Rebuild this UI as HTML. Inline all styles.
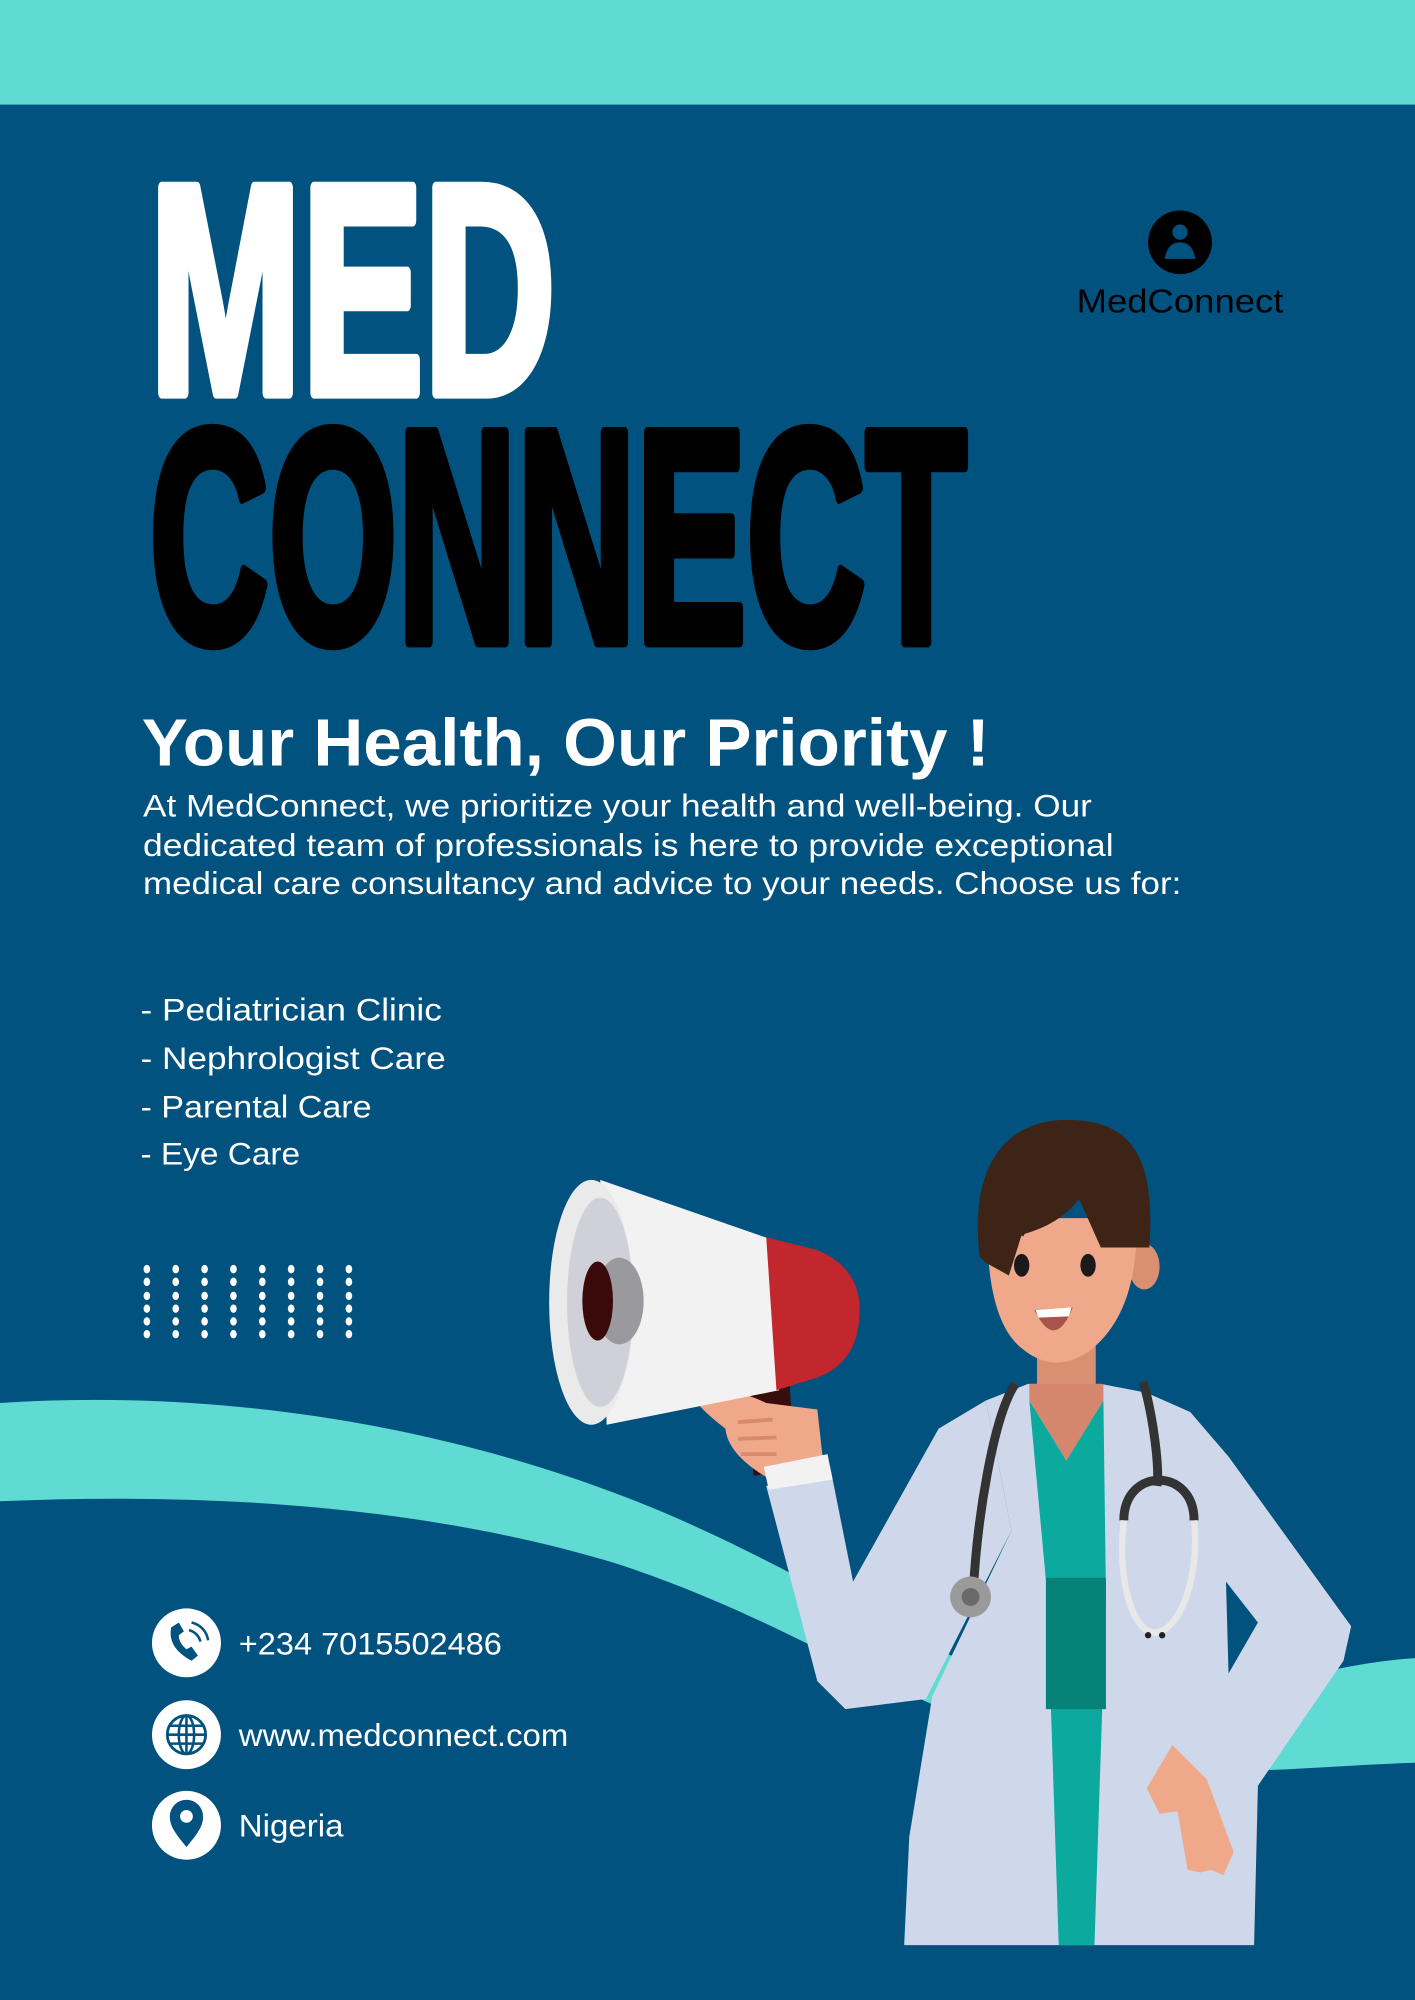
<!DOCTYPE html>
<html><head><meta charset="utf-8"><style>
html,body{margin:0;padding:0;background:#02527f;}
svg{display:block}
text{font-family:"Liberation Sans",sans-serif}
</style></head><body>
<svg width="1415" height="2000" viewBox="0 0 1108 1568" preserveAspectRatio="none" xmlns="http://www.w3.org/2000/svg">
<rect width="1108" height="1568" fill="#02527f"/>
<rect width="1108" height="82" fill="#5fdbd3"/>

<!-- wave -->
<path d="M0,1100 C150,1090 320,1110 480,1170 C620,1222 720,1300 830,1330 C930,1350 1020,1305 1108,1300 L1108,1382 C1010,1385 920,1400 820,1370 C700,1335 620,1270 480,1225 C330,1180 160,1170 0,1177 Z" fill="#5fdbd3"/>

<!-- titles -->
<text x="117" y="308" font-size="234" font-weight="bold" fill="#fff" stroke="#fff" stroke-width="9" stroke-linejoin="round" textLength="318" lengthAdjust="spacingAndGlyphs">MED</text>
<text x="117" y="503" font-size="238" font-weight="bold" fill="#000" stroke="#000" stroke-width="9" stroke-linejoin="round" textLength="640" lengthAdjust="spacingAndGlyphs">CONNECT</text>

<!-- logo -->
<circle cx="924" cy="190" r="25" fill="#000"/>
<circle cx="924" cy="182" r="6" fill="#02527f"/>
<path d="M912,203 Q914,190 924,190 Q934,190 936,203 Z" fill="#02527f"/>
<text x="843" y="245" font-size="26" fill="#000" textLength="162" lengthAdjust="spacingAndGlyphs">MedConnect</text>

<text x="111" y="600" font-size="52" font-weight="bold" fill="#fff" textLength="664" lengthAdjust="spacingAndGlyphs">Your Health, Our Priority !</text>
<g fill="#fff" font-size="25">
<text x="112" y="640" textLength="743" lengthAdjust="spacingAndGlyphs">At MedConnect, we prioritize your health and well-being. Our</text>
<text x="112" y="671" textLength="760" lengthAdjust="spacingAndGlyphs">dedicated team of professionals is here to provide exceptional</text>
<text x="112" y="701" textLength="813" lengthAdjust="spacingAndGlyphs">medical care consultancy and advice to your needs. Choose us for:</text>
<text x="110" y="800" textLength="236" lengthAdjust="spacingAndGlyphs">- Pediatrician Clinic</text>
<text x="110" y="838" textLength="239" lengthAdjust="spacingAndGlyphs">- Nephrologist Care</text>
<text x="110" y="876" textLength="181" lengthAdjust="spacingAndGlyphs">- Parental Care</text>
<text x="110" y="913" textLength="125" lengthAdjust="spacingAndGlyphs">- Eye Care</text>
<text x="187" y="1297" textLength="206" lengthAdjust="spacingAndGlyphs">+234 7015502486</text>
<text x="187" y="1369" textLength="258" lengthAdjust="spacingAndGlyphs">www.medconnect.com</text>
<text x="187" y="1440" textLength="82" lengthAdjust="spacingAndGlyphs">Nigeria</text>
</g>

<!-- dots -->
<g fill="#fff">
<g id="col">
<ellipse cx="115" cy="995" rx="2.6" ry="3.3"/><ellipse cx="115" cy="1005" rx="2.6" ry="3.3"/><ellipse cx="115" cy="1016" rx="2.6" ry="3.3"/><ellipse cx="115" cy="1026" rx="2.6" ry="3.3"/><ellipse cx="115" cy="1036" rx="2.6" ry="3.3"/><ellipse cx="115" cy="1046" rx="2.6" ry="3.3"/>
</g>
<use href="#col" x="22.6"/><use href="#col" x="45.2"/><use href="#col" x="67.8"/><use href="#col" x="90.4"/><use href="#col" x="113"/><use href="#col" x="135.6"/><use href="#col" x="158.2"/>
</g>

<!-- contact icons -->
<circle cx="146" cy="1288" r="27" fill="#fff"/>
<path d="M134,1276 Q131,1292 150,1302 L155,1298 L150,1291 L146,1293 Q140,1288 140,1282 L144,1279 L140,1272 Z" fill="#02527f"/>
<path d="M148,1278 Q155,1280 157,1287 M150,1272 Q161,1275 163,1286" stroke="#02527f" stroke-width="2" fill="none"/>
<circle cx="146" cy="1360" r="27" fill="#fff"/>
<circle cx="146" cy="1360" r="15" fill="none" stroke="#02527f" stroke-width="2.2"/>
<ellipse cx="146" cy="1360" rx="6" ry="15" fill="none" stroke="#02527f" stroke-width="2"/>
<path d="M131,1360 H161 M133,1353 H159 M133,1367 H159 M146,1345 V1375" stroke="#02527f" stroke-width="2"/>
<circle cx="146" cy="1431" r="27" fill="#fff"/>
<path d="M146,1448 C136,1436 133,1431 133,1424 A13,13 0 0 1 159,1424 C159,1431 156,1436 146,1448 Z" fill="#02527f"/>
<circle cx="146" cy="1424" r="5" fill="#fff"/>

<!-- megaphone -->
<path d="M585,1080 L618,1078 L622,1152 L590,1157 Z" fill="#3a0d0d"/>
<path d="M540,1092 Q570,1085 600,1100 L640,1105 L645,1150 L600,1158 Q570,1140 568,1120 Q548,1105 540,1092 Z" fill="#f0a88a"/>
<path d="M578,1115 L605,1113 M578,1128 L608,1127 M580,1140 L608,1140" stroke="#d88a6e" stroke-width="3"/>
<path d="M470,925 L605,972 L610,1090 L475,1117 Z" fill="#f2f2f2"/>
<path d="M600,970 L640,980 Q675,995 673,1030 Q672,1068 640,1080 L608,1090 Z" fill="#c1272d"/>
<ellipse cx="463" cy="1021" rx="33" ry="96" fill="#eaeaea"/>
<ellipse cx="470" cy="1021" rx="26" ry="82" fill="#d0d0d8"/>
<ellipse cx="485" cy="1020" rx="19" ry="34" fill="#9a9a9e"/>
<ellipse cx="468" cy="1020" rx="12" ry="31" fill="#3a0a0a"/>

<!-- doctor -->
<path d="M600,1165 L650,1150 L668,1240 L735,1120 L772,1098 L792,1200 L725,1332 L662,1340 L640,1318 Z" fill="#cfd8ea"/>
<path d="M772,1098 L805,1085 L862,1085 L898,1092 L932,1107 L962,1142 L1058,1275 L1052,1302 L985,1400 L982,1525 L708,1525 L712,1440 L730,1330 L792,1200 Z" fill="#cfd8ea"/>
<path d="M960,1240 L985,1272 L962,1312 Z" fill="#02527f"/>
<path d="M806,1098 L835,1145 L864,1098 L866,1250 L857,1525 L829,1525 L820,1250 Z" fill="#0ba99e"/>
<rect x="819" y="1237" width="47" height="103" fill="#078278"/>
<rect x="812" y="1045" width="46" height="45" fill="#d98f72"/>
<path d="M806,1085 L864,1085 L864,1098 L835,1145 L806,1098 Z" fill="#d4876c"/>
<ellipse cx="896" cy="993" rx="12" ry="18" fill="#d98f72"/>
<path d="M773,955 Q772,1035 800,1057 Q825,1078 852,1060 Q892,1030 890,955 Z" fill="#f0a88a"/>
<path d="M767,985 C758,905 795,878 835,878 C885,878 905,905 900,978 L862,978 L845,940 Q830,960 800,968 L790,1000 L772,990 Z" fill="#3d2416"/>
<path d="M775,972 Q790,962 802,968" stroke="#3d2416" stroke-width="3" fill="none"/>
<ellipse cx="800" cy="992" rx="6" ry="9" fill="#1a1a1a"/>
<ellipse cx="852" cy="992" rx="6" ry="9" fill="#1a1a1a"/>
<path d="M810,1027 Q826,1060 840,1025 Z" fill="#a8544a"/>
<path d="M811,1027 L839,1025 L837,1032 L813,1033 Z" fill="#fff"/>
<path d="M795,1085 C778,1110 765,1190 762,1250" stroke="#333" stroke-width="7" fill="none"/>
<circle cx="760" cy="1252" r="16" fill="#9a9a9a"/>
<circle cx="760" cy="1252" r="7" fill="#6a6a6a"/>
<path d="M895,1083 C903,1110 908,1150 906,1165" stroke="#333" stroke-width="7" fill="none"/>
<path d="M880,1192 C880,1150 935,1150 935,1192" stroke="#333" stroke-width="7" fill="none"/>
<path d="M880,1192 C874,1240 888,1280 904,1280 C922,1280 940,1240 935,1192" stroke="#e8e8e8" stroke-width="5" fill="none"/>
<circle cx="899" cy="1282" r="2.5" fill="#222"/><circle cx="910" cy="1282" r="2.5" fill="#222"/>
<path d="M598,1150 L648,1140 L652,1160 L602,1168 Z" fill="#f2f2f2"/>
<path d="M918,1368 L945,1395 L966,1452 L958,1470 L948,1466 L940,1468 L930,1466 L922,1420 L908,1422 L898,1402 Z" fill="#f0a88a"/>
</svg>
</body></html>
